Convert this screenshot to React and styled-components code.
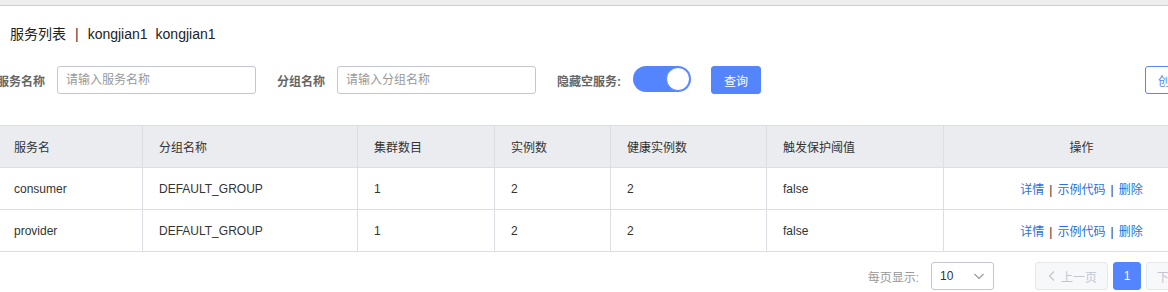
import React from "react";
import styled, { createGlobalStyle } from "styled-components";

const Global = createGlobalStyle`
  html, body { margin: 0; padding: 0; background: #fff; }
  body { width: 1168px; height: 292px; overflow: hidden; font-family: "Liberation Sans", "Noto Sans CJK SC", sans-serif; color: #333; }
  * { box-sizing: border-box; }
`;

const TopStrip = styled.div`
  height: 6px;
  background: #eeeeee;
  border-bottom: 1px solid #cfcfcf;
`;

const Main = styled.div`
  width: 1222px;
  margin-left: -3px;
`;

const Title = styled.div`
  display: flex;
  align-items: center;
  height: 20px;
  margin: 18px 0 0 13px;
  font-size: 14px;
  color: #222;
  line-height: 20px;
`;

const Sep = styled.span`
  margin: 0 ${(p) => p.$m || 9}px;
  color: ${(p) => p.$color || "#333"};
`;

const Gap = styled.span`
  display: inline-block;
  width: 8px;
`;

const FilterRow = styled.div`
  display: flex;
  align-items: center;
  margin-top: 22px;
  height: 28px;
`;

const Label = styled.label`
  font-size: 12px;
  font-weight: bold;
  color: #666;
  margin-right: 12px;
  white-space: nowrap;
`;

const Input = styled.input`
  width: 199px;
  height: 28px;
  border: 1px solid #c4c6cf;
  border-radius: 3px;
  padding: 0 8px;
  font-size: 12px;
  font-family: inherit;
  margin-right: 21px;
  outline: none;
  &::placeholder { color: #999; }
`;

const Switch = styled.div`
  width: 58px;
  height: 26px;
  border-radius: 13px;
  background: #5584ff;
  position: relative;
  margin-right: 20px;
  margin-top: -2px;
`;

const Knob = styled.div`
  position: absolute;
  right: 1px;
  top: 1px;
  width: 24px;
  height: 24px;
  border-radius: 50%;
  background: #fff;
  border: 1px solid #5584ff;
`;

const Button = styled.button`
  height: 28px;
  padding: 0 12px;
  border-radius: 3px;
  font-size: 12px;
  font-family: inherit;
  cursor: pointer;
  background: ${(p) => (p.$outline ? "#fff" : "#5584ff")};
  color: ${(p) => (p.$outline ? "#5584ff" : "#fff")};
  border: 1px solid #5584ff;
  white-space: nowrap;
`;

const Spacer = styled.div`
  flex: 1;
`;

const Table = styled.table`
  width: 1222px;
  margin-top: 31px;
  border-collapse: collapse;
  table-layout: fixed;
  font-size: 12px;
`;

const Th = styled.th`
  height: 42px;
  background: #ebecf0;
  border: 1px solid #dcdee3;
  font-weight: normal;
  color: #333;
  text-align: ${(p) => p.$align || "left"};
  padding: 0 16px;
`;

const Td = styled.td`
  height: 42px;
  border: 1px solid #dcdee3;
  color: #333;
  text-align: ${(p) => p.$align || "left"};
  padding: 0 16px;
`;

const Link = styled.a`
  color: #2a6fdb;
  text-decoration: none;
  cursor: pointer;
`;

const Pager = styled.div`
  display: flex;
  justify-content: flex-end;
  align-items: center;
  margin-top: 10px;
  height: 28px;
  font-size: 12px;
`;

const PagerLabel = styled.span`
  color: #999;
  margin-right: 12px;
`;

const Select = styled.div`
  width: 63px;
  height: 28px;
  border: 1px solid #c4c6cf;
  border-radius: 3px;
  display: flex;
  align-items: center;
  justify-content: space-between;
  padding: 0 8px;
  color: #333;
  margin-right: 41px;
`;

const PageBtn = styled.div`
  height: 28px;
  min-width: 28px;
  padding: 0 ${(p) => (p.$num ? "0" : "10px")};
  display: flex;
  align-items: center;
  justify-content: center;
  gap: 3px;
  border-radius: 3px;
  margin-left: ${(p) => (p.$first ? "0" : "5px")};
  background: ${(p) => (p.$active ? "#5584ff" : "#f7f8fa")};
  border: 1px solid ${(p) => (p.$active ? "#5584ff" : "#e6e7eb")};
  color: ${(p) => (p.$active ? "#fff" : "#c4c6cf")};
  white-space: nowrap;
`;

const cols = [145, 215, 137, 116, 156, 177, 276];

const rows = [
  ["consumer", "DEFAULT_GROUP", "1", "2", "2", "false"],
  ["provider", "DEFAULT_GROUP", "1", "2", "2", "false"],
];

const Chevron = ({ dir = "down", color = "#999" }) => (
  <svg width="12" height="12" viewBox="0 0 12 12" fill="none" stroke={color} strokeWidth="1.2">
    {dir === "down" ? <path d="M1.5 4 L6 8.5 L10.5 4" /> : dir === "left" ? <path d="M8 1.5 L3.5 6 L8 10.5" /> : <path d="M4 1.5 L8.5 6 L4 10.5" />}
  </svg>
);

export default function App() {
  return (
    <>
      <Global />
      <TopStrip />
      <Main>
        <Title>
          服务列表<Sep $m={9} $color="#333">|</Sep>kongjian1<Gap />kongjian1
        </Title>
        <FilterRow>
          <Label>服务名称</Label>
          <Input placeholder="请输入服务名称" />
          <Label>分组名称</Label>
          <Input placeholder="请输入分组名称" />
          <Label>隐藏空服务:</Label>
          <Switch>
            <Knob />
          </Switch>
          <Button>查询</Button>
          <Spacer />
          <Button $outline>创建服务</Button>
        </FilterRow>
        <Table>
          <colgroup>
            {cols.map((w, i) => (
              <col key={i} style={{ width: w }} />
            ))}
          </colgroup>
          <thead>
            <tr>
              <Th>服务名</Th>
              <Th>分组名称</Th>
              <Th>集群数目</Th>
              <Th>实例数</Th>
              <Th>健康实例数</Th>
              <Th>触发保护阈值</Th>
              <Th $align="center">操作</Th>
            </tr>
          </thead>
          <tbody>
            {rows.map((r, i) => (
              <tr key={i}>
                {r.map((c, j) => (
                  <Td key={j}>{c}</Td>
                ))}
                <Td $align="center">
                  <Link>详情</Link>
                  <Sep $m={5}>|</Sep>
                  <Link>示例代码</Link>
                  <Sep $m={5}>|</Sep>
                  <Link>删除</Link>
                </Td>
              </tr>
            ))}
          </tbody>
        </Table>
        <Pager>
          <PagerLabel>每页显示:</PagerLabel>
          <Select>
            <span>10</span>
            <Chevron />
          </Select>
          <PageBtn $first>
            <Chevron dir="left" color="#c4c6cf" />
            上一页
          </PageBtn>
          <PageBtn $num $active>1</PageBtn>
          <PageBtn>
            下一页
            <Chevron dir="right" color="#c4c6cf" />
          </PageBtn>
        </Pager>
      </Main>
    </>
  );
}
